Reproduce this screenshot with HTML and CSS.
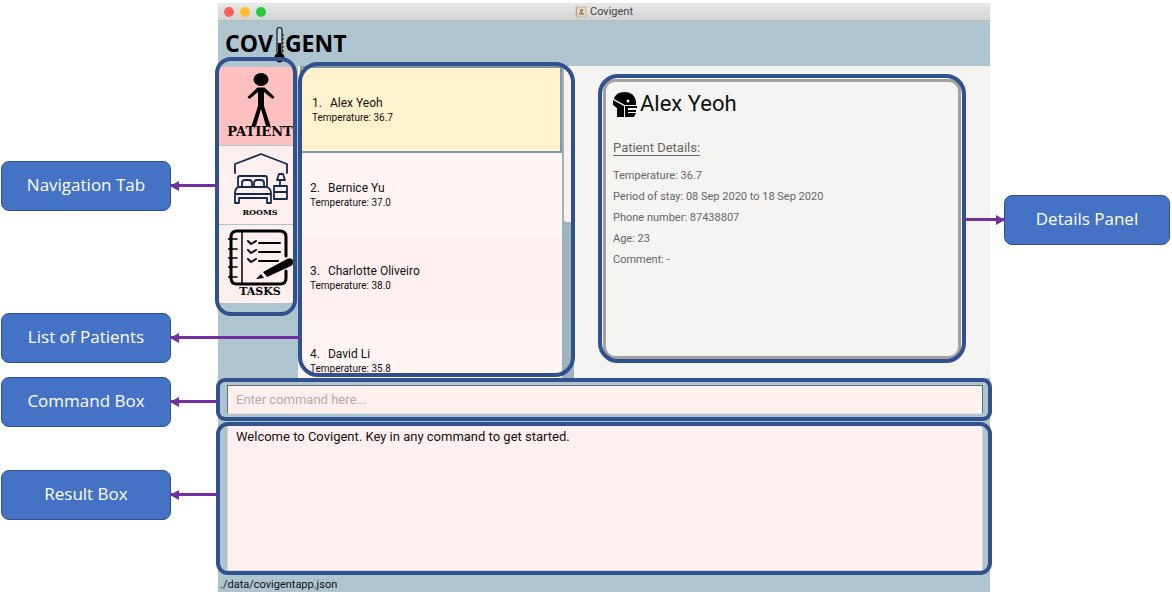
FILE: index.html
```html
<!DOCTYPE html>
<html lang="en">
<head>
<meta charset="utf-8">
<meta name="viewport" content="width=device-width, initial-scale=1">
<title>Covigent</title>
<link rel="stylesheet" href="styles.css">
</head>
<body>
<div class="stage">
  <div class="notes notes-left">
    <div class="note note-nav">Navigation Tab<span class="arrow"></span></div>
    <div class="note note-list">List of Patients<span class="arrow arrow-long"></span></div>
    <div class="note note-command">Command Box<span class="arrow"></span></div>
    <div class="note note-result">Result Box<span class="arrow"></span></div>
  </div>

  <main class="window">
    <header class="titlebar">
      <div class="lights"><span class="light red"></span><span class="light amber"></span><span class="light green"></span></div>
      <div class="title">
        <svg width="12" height="12" viewBox="0 0 12 12" aria-hidden="true"><rect x="1" y="1" width="10" height="10" fill="#e6d3b8" stroke="#c9b8a3"/><path d="M1.500 1v10" stroke="#aaa39c"/><circle cx="6.500" cy="4.500" r="1.500" fill="#8c7f74"/><path d="M6 5h1v2h2v1.500H4V7h2z" fill="#8c7f74"/></svg>
        <span>Covigent</span>
      </div>
    </header>

    <div class="brand" aria-label="Covigent">
      <span>COV</span>
      <svg class="thermo" width="12" height="38" viewBox="0 0 12 38" aria-hidden="true"><path d="M4 27V4a2.500 2.500 0 0 1 5 0v23" fill="#c3d2d9" stroke="#111" stroke-width="1.200"/><path d="M5 17h3v12H5z" fill="#000"/><circle cx="6.500" cy="31.500" r="5" fill="#000"/><path d="M9 9h2M9 13h2M9 17h2M9 21h2M9 25h2" stroke="#111"/><path d="M3.500 32a3 3 0 0 0 2 2" stroke="#aebfc8" fill="none"/></svg>
      <span>GENT</span>
    </div>

    <div class="workspace">
      <div class="sidebar">
        <nav class="tabs">
          <button class="tab active" type="button">
            <svg width="32" height="53" viewBox="0 0 32 53" aria-hidden="true"><ellipse cx="16" cy="6.500" rx="7.500" ry="6.500"/><path d="M12.500 14.500h7l10 9.500-2 2-8.500-7v14l6.500 20h-4.500L16 36l-5 17H6.500L13 33V19l-8.500 7-2-2z"/></svg>
            <span class="tab-label label-large">PATIENT</span>
          </button>
          <button class="tab" type="button">
            <svg width="56" height="54" viewBox="0 0 56 54" fill="none" stroke="#152a4a" stroke-width="1.800" stroke-linejoin="round" stroke-linecap="round" aria-hidden="true"><path d="M2 21V12L28 2l26 10v9M5 35V26q0-2 2-2h25q2 0 2 2v9M9 34v-3q0-3 3-3h4q3 0 3 3v3M21 34v-3q0-3 3-3h4q3 0 3 3v3M5 35h29q4 2 4 6v10h-4v-5H6v5H2V41q0-4 3-6M2 42h36M41 47V34h13v13M41 40h13M41 47h13M47 34v-5M44 34h7M46 22h4l2 6h-8z"/></svg>
            <span class="tab-label label-small">ROOMS</span>
          </button>
          <button class="tab" type="button">
            <svg width="66" height="57" viewBox="0 0 66 57" fill="none" stroke="#000" stroke-width="3" stroke-linecap="round" stroke-linejoin="round" aria-hidden="true"><path d="M58 27V8q0-6-6-6H9Q3 2 3 8v41q0 6 6 6h43q6 0 6-6v-7"/><path stroke-width="1.500" d="M14 3v52M0 10h9M0 20h9M0 29h9M0 38h9M0 48h9"/><path stroke-width="2" d="m20 12 3 3 5-3M31 14h21M20 21l3 3 5-3M31 23h21M20 30l3 3 5-3M31 32h19"/><path d="m35 43 24-13q4-2 6 1 1 4-2 6L39 48zM28 50l5-5 3 4z" fill="#000" stroke="none"/></svg>
            <span class="tab-label label-medium">TASKS</span>
          </button>
        </nav>
        <span class="frame frame-nav"></span>
      </div>

      <section class="patients">
        <ol class="patient-list">
          <li class="patient selected"><div class="patient-name"><span>1.</span><span>Alex Yeoh</span></div><div class="patient-temp">Temperature: 36.7</div></li>
          <li class="patient"><div class="patient-name"><span>2.</span><span>Bernice Yu</span></div><div class="patient-temp">Temperature: 37.0</div></li>
          <li class="patient"><div class="patient-name"><span>3.</span><span>Charlotte Oliveiro</span></div><div class="patient-temp">Temperature: 38.0</div></li>
          <li class="patient"><div class="patient-name"><span>4.</span><span>David Li</span></div><div class="patient-temp">Temperature: 35.8</div></li>
        </ol>
        <div class="track"><div class="thumb"></div></div>
        <span class="frame frame-list"></span>
      </section>

      <section class="details">
        <article class="card">
          <div class="card-title">
            <svg width="24" height="25" viewBox="0 0 24 25" aria-hidden="true"><path d="M1 6Q4 0 11 0q10 0 12 9v4H12L1 7z"/><path d="M0 8l11 6v11H4v-9l-4-3z"/><path d="M12 14h12v2H15v2h8v2h-8v1h8l-2 4h-9z"/><circle cx="15" cy="9" r="1.500" fill="#f4f4f2"/></svg>
            <h1>Alex Yeoh</h1>
          </div>
          <h2>Patient Details:</h2>
          <p>Temperature: 36.7</p>
          <p>Period of stay: 08 Sep 2020 to 18 Sep 2020</p>
          <p>Phone number: 87438807</p>
          <p>Age: 23</p>
          <p>Comment: -</p>
          <span class="frame frame-details"></span>
        </article>
      </section>
    </div>

    <div class="command">
      <input class="command-input" type="text" aria-label="Command" placeholder="Enter command here...">
      <span class="frame frame-command"></span>
    </div>

    <div class="result">
      <textarea class="result-text" aria-label="Result" readonly>Welcome to Covigent. Key in any command to get started.</textarea>
      <span class="frame frame-result"></span>
    </div>

    <footer class="status">./data/covigentapp.json</footer>
  </main>

  <div class="notes notes-right">
    <div class="note note-details">Details Panel<span class="arrow arrow-right"></span></div>
  </div>
</div>
</body>
</html>
```
FILE: styles.css
```css
* { box-sizing: border-box; }

body {
  margin: 0;
  background: #fff;
  color: #111;
  font-family: Roboto, "Liberation Sans", sans-serif;
}

.stage {
  display: grid;
  grid-template-columns: 218px minmax(0, 1fr) 182px;
  height: 100vh;
  min-height: 560px;
  padding: 3px 0;
}

/* Annotations */
.notes { position: relative; z-index: 3; }
.notes-left { padding: 158px 47px 0 1px; }
.notes-right { padding: 192px 2px 0 14px; }

.note {
  position: relative;
  display: flex;
  align-items: center;
  justify-content: center;
  height: 50px;
  padding-bottom: 2px;
  border: 1px solid #2f528f;
  border-radius: 8px;
  background: #4472c4;
  color: #fff;
  font: 17px/24px "Open Sans", "Noto Sans", sans-serif;
}
.note-list { margin-top: 102px; }
.note-command { margin-top: 14px; }
.note-result { margin-top: 43px; }

.arrow {
  position: absolute;
  left: 100%;
  top: 50%;
  width: 47px;
  height: 3px;
  margin-top: -2px;
  background: #7030a0;
}
.arrow::before {
  content: "";
  position: absolute;
  left: 0;
  top: -3px;
  border: solid transparent;
  border-width: 5px 9px 5px 0;
  border-right-color: #7030a0;
}
.arrow-long { width: 130px; }
.arrow-right { left: auto; right: 100%; width: 40px; }
.arrow-right::before {
  left: auto;
  right: 0;
  border-width: 5px 0 5px 9px;
  border-left-color: #7030a0;
}

.frame {
  position: absolute;
  z-index: 2;
  border: 4px solid #2f528f;
  pointer-events: none;
}
.frame-nav { inset: -9px 1px 62px -3px; border-radius: 16px; }
.frame-list { inset: -4px -1px 1px 0; border-radius: 20px; }
.frame-details { inset: -8px -8px -7px -8px; border-radius: 20px; }
.frame-command { inset: 0 -2px 1px -2px; border-radius: 9px; }
.frame-result { inset: 0 -2px -1px -2px; border-radius: 12px; }

/* Window */
.window {
  display: flex;
  flex-direction: column;
  min-height: 0;
  background: #aec4cf;
}

.titlebar {
  position: relative;
  display: flex;
  justify-content: center;
  align-items: center;
  height: 18px;
  border-bottom: 1px solid #b9b9b9;
  background: linear-gradient(#e8e8e8, #d3d3d3);
}
.lights { position: absolute; left: 6px; display: flex; gap: 6px; }
.light { width: 10px; height: 10px; border-radius: 50%; }
.red { background: #ff5f57; }
.amber { background: #ffbd2e; }
.green { background: #28c940; }
.title { display: flex; align-items: center; gap: 3px; color: #444; font-size: 11px; line-height: 16px; }

.brand {
  display: flex;
  align-items: flex-start;
  height: 45px;
  padding: 5px 0 0 7px;
  color: #000;
  font: bold 23px/34px "Open Sans", sans-serif;
}
.thermo { position: relative; z-index: 1; }

.workspace {
  flex: 1;
  display: grid;
  grid-template-columns: 80px minmax(0, 276fr) minmax(0, 416fr);
  min-height: 0;
}

.sidebar, .patients, .command, .result { position: relative; }

.tabs { display: flex; flex-direction: column; gap: 1px; padding: 1px 4px 0 1px; }
.tab {
  display: flex;
  flex-direction: column;
  align-items: center;
  justify-content: center;
  height: 78px;
  padding: 0 0 1px;
  overflow: hidden;
  border: 0;
  background: #fff0f0;
  color: #000;
  font-family: "DejaVu Serif", serif;
}
.tab svg { flex: none; margin-left: 8px; }
.tab.active { background: #ffc0c0; }
.tab-label { margin-left: 7px; font-weight: bold; line-height: 12px; }
.label-large { font-size: 13px; }
.label-medium { font-size: 11px; }
.label-small { font-size: 8px; }

.patients {
  display: grid;
  grid-template-columns: minmax(0, 1fr) 12px;
  min-height: 0;
}
.patient-list { margin: 0; padding: 0 0 0 2px; overflow: hidden; list-style: none; background: #fff5f5; }
.patient { height: 83px; padding: 27px 10px 0; background: #fff5f5; }
.patient:nth-child(odd) { background: #fff0f0; }
.patient.selected {
  height: 87px;
  border: 2px solid #7f98a8;
  background: #fff2cc;
}
.patient-name { display: flex; gap: 8px; font-size: 12px; line-height: 16px; }
.patient-temp { font-size: 10px; line-height: 13px; }
.track { background: #9fb3bd; }
.thumb { height: 50%; margin-left: 2px; border-radius: 0 0 3px 3px; background: #fff0f0; }

.details { min-height: 0; padding: 13px 29px 19px; background: #f4f4f2; }
.card {
  position: relative;
  height: 100%;
  padding: 8px 7px;
  border: 3px solid #a2a2a0;
  border-radius: 12px;
  color: #666;
}
.card-title { display: flex; align-items: center; gap: 3px; color: #111; }
h1 { margin: 0; font-size: 22px; font-weight: 400; line-height: 28px; }
h2 { margin: 20px 0 7px; font-size: 13px; font-weight: 400; line-height: 20px; text-decoration: underline; text-underline-offset: 3px; }
p { margin: 0; font-size: 11px; line-height: 21px; }

.command { height: 44px; padding: 7px 7px 8px 9px; }
.command-input {
  display: block;
  width: 100%;
  height: 29px;
  padding: 0 8px;
  border: 1px solid #5f6f78;
  border-bottom-color: #e5e5e5;
  border-radius: 0;
  background: #fff0f0;
  font: 13px/16px Roboto, "Liberation Sans", sans-serif;
}
.command-input::placeholder { color: #b3aaaa; opacity: 1; }

.result { height: 152px; padding: 1px 7px 3px 9px; }
.result-text {
  display: block;
  width: 100%;
  height: 100%;
  padding: 5px 8px;
  resize: none;
  border: 1px solid #d6d3d4;
  border-radius: 0;
  background: #fff0f0;
  color: #111;
  font: 13px/16px Roboto, "Liberation Sans", sans-serif;
}

.status { height: 18px; padding-left: 2px; font-size: 11px; line-height: 22px; }
```
